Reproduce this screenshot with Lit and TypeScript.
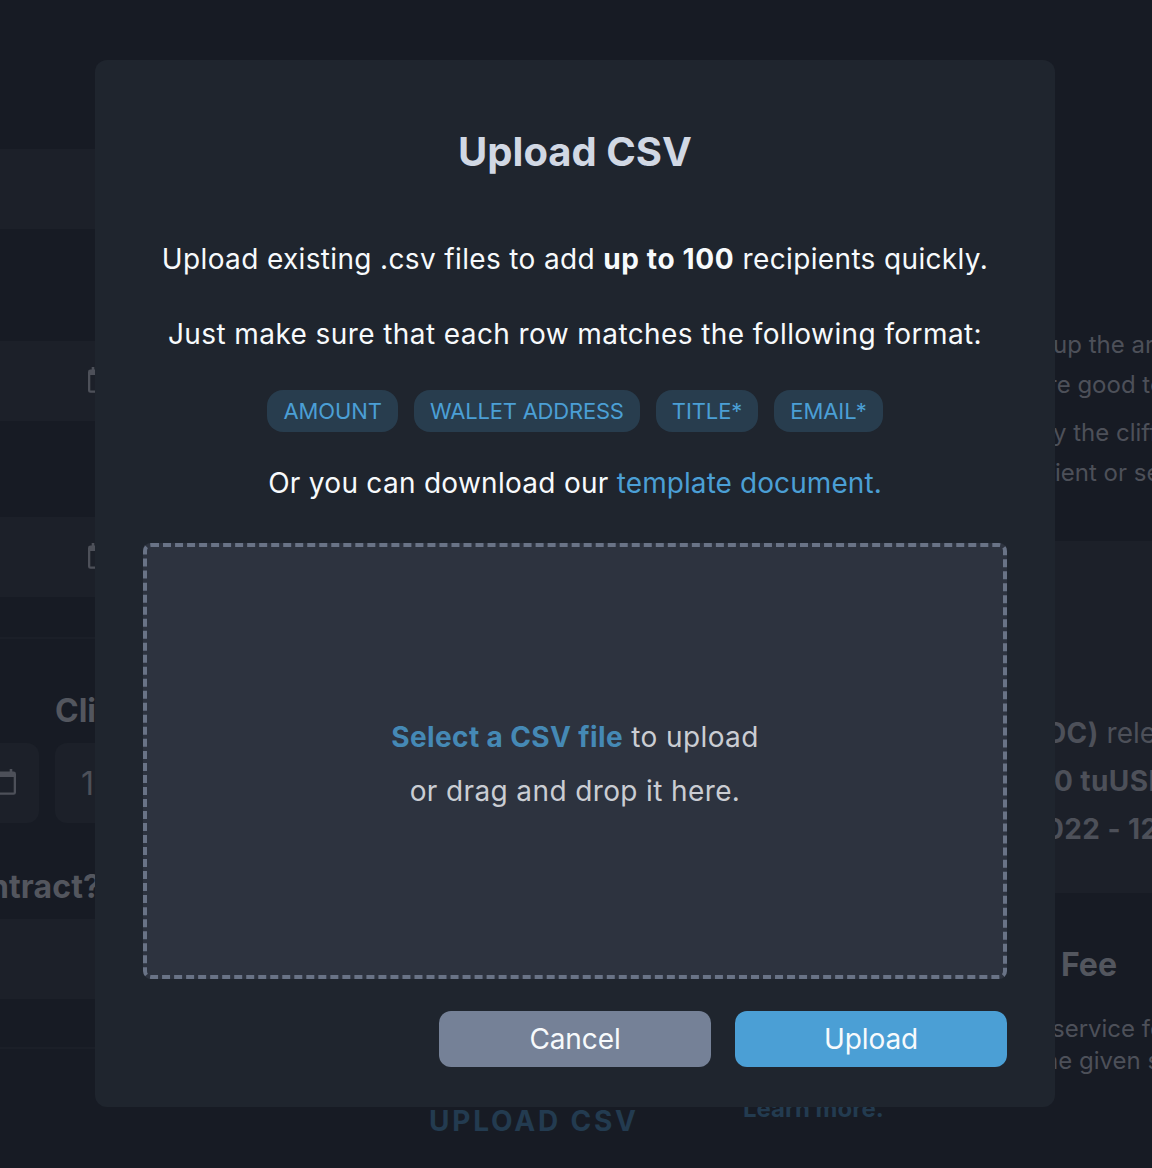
import { LitElement, html, css, svg } from "lit";
import { customElement } from "lit/decorators.js";

const calendar = html`<svg class="calendar" viewBox="0 0 24 28" aria-hidden="true">
  ${svg`<path fill-rule="evenodd" d="M3.7 0h2.6v2.6h11.4V0h2.6v2.6H21.6A2.4 2.4 0 0 1 24 5v18.4a2.4 2.4 0 0 1-2.4 2.4H2.4A2.4 2.4 0 0 1 0 23.4V5a2.4 2.4 0 0 1 2.4-2.4h1.3zM2.3 8v15.5h19.4V8z"/>`}
</svg>`;

/** Stream form that stays dimmed underneath the dialog. */
@customElement("stream-form")
export class StreamForm extends LitElement {
  static styles = css`
    :host { display: grid; grid-template-columns: 743px 409px; height: 1168px; overflow: hidden; color: #4d5059; }
    * { box-sizing: border-box; }
    .form { display: flex; flex-direction: column; padding-top: 149px; overflow: hidden; }
    .field { height: 80px; background: #1c2029; flex: none; display: flex; align-items: center; }
    .dated { padding-left: 88px; }
    .gap-a { margin-top: 112px; }
    .gap-b { margin-top: 96px; }
    .calendar { width: 24px; height: 28px; fill: currentColor; flex: none; margin-top: -1px; }
    .rule { height: 2px; background: #1b1f28; flex: none; margin-top: 40px; }
    .rule.last { margin-top: 48px; }
    .label { font-size: 32px; font-weight: 700; line-height: 40px; color: #53565e; white-space: nowrap; }
    .cliff { padding-left: 55px; margin-top: 52px; }
    .pair { display: flex; gap: 16px; margin-top: 12px; }
    .small { width: 39px; border-radius: 0 12px 12px 0; overflow: hidden; }
    .small .calendar { margin-left: -8px; }
    .number { width: 160px; border-radius: 12px; padding-left: 26px; font-size: 32px; }
    .contract { margin: 44px 0 12px; text-indent: -11px; letter-spacing: 0.1px; }
    .link { color: #233b50; font-weight: 700; }
    .open { align-self: flex-start; margin: 52px 0 0 429px; font-size: 28px; line-height: 40px; letter-spacing: 2.8px; white-space: nowrap; }
    .side { display: flex; flex-direction: column; padding-top: 325px; font-size: 24px; line-height: 40px; white-space: nowrap; overflow: hidden; }
    .side p { margin: 0; flex: none; }
    .a1 { padding-left: 310px; }
    .a2 { padding-left: 305px; }
    .side .a3 { padding-left: 310px; margin-top: 8px; }
    .a4 { padding-left: 312px; }
    .summary { background: #1c2029; height: 352px; margin-top: 48px; padding-top: 168px; font-size: 28px; line-height: 48px; flex: none; }
    .summary b { letter-spacing: 0.4px; }
    .b1 { padding-left: 303px; }
    .b2 { padding-left: 311px; }
    .b3 { padding-left: 302px; }
    .fee { padding-left: 318px; margin-top: 52px; }
    .note { line-height: 32px; }
    .side .c1 { padding-left: 309px; margin-top: 28px; }
    .c2 { padding-left: 301px; }
    .side .more { margin-top: 16px; }
  `;

  render() {
    return html`
      <section class="form">
        <div class="field"></div>
        <div class="field dated gap-a">${calendar}</div>
        <div class="field dated gap-b">${calendar}</div>
        <div class="rule"></div>
        <div class="label cliff">Cli</div>
        <div class="pair">
          <div class="field small">${calendar}</div>
          <div class="field number">1</div>
        </div>
        <div class="label contract">ntract?</div>
        <div class="field"></div>
        <div class="rule last"></div>
        <div class="link open">UPLOAD CSV</div>
      </section>
      <section class="side">
        <p class="a1">up the ar</p>
        <p class="a2">re good to</p>
        <p class="a3">y the cliff</p>
        <p class="a4">ient or se</p>
        <div class="summary">
          <p class="b1"><b>DC)</b> rele</p>
          <p class="b2"><b>0 tuUSD</b></p>
          <p class="b3"><b>022 - 12</b></p>
        </div>
        <div class="label fee">Fee</div>
        <p class="note c1">service fe</p>
        <p class="note c2">he given s</p>
        <p class="note link more">Learn more.</p>
      </section>
    `;
  }
}

/** Dialog for picking a CSV file of recipients. */
@customElement("upload-dialog")
export class UploadDialog extends LitElement {
  static styles = css`
    :host { display: flex; flex-direction: column; box-sizing: border-box; width: 960px; height: 1047px; padding: 68px 48px 40px; background: #1f252e; border-radius: 12px; color: #f7fafc; font-size: 28px; text-align: center; white-space: nowrap; }
    * { box-sizing: border-box; }
    h2 { margin: 0; font-size: 40px; line-height: 48px; font-weight: 700; color: #d1d8e4; }
    p { margin: 0; line-height: 42px; letter-spacing: 0.35px; }
    .lead { margin-top: 62px; letter-spacing: 0.35px; }
    .lead b { letter-spacing: 0.65px; }
    .format { margin-top: 33px; letter-spacing: 0.41px; }
    .tags { display: flex; justify-content: center; gap: 16px; margin-top: 35px; }
    .tag { height: 42px; padding: 0 16px; border-radius: 16px; background: #283d4e; color: #4b9fd5; font-size: 22px; line-height: 42px; letter-spacing: -0.08px; }
    .tag.wide { letter-spacing: -0.2px; }
    .template { margin-top: 30px; letter-spacing: 0.28px; }
    .link { color: #4b9fd5; }
    .template .link { letter-spacing: 0.08px; }
    .drop { display: flex; flex-direction: column; align-items: center; justify-content: center; height: 436px; margin-top: 39px; padding-top: 6px; border: 4px dashed #697386; border-radius: 8px; background: #2d333f; color: #cacdd3; }
    .drop p { line-height: 54px; letter-spacing: 0.38px; }
    .drop b { color: #4589b5; }
    .actions { display: flex; justify-content: flex-end; gap: 24px; margin-top: 32px; }
    button { width: 272px; height: 56px; padding: 0; border: 0; border-radius: 12px; background: #4b9fd5; color: #f7fafc; font: 400 28px/56px Inter, sans-serif; letter-spacing: -0.1px; }
    .cancel { background: #758197; }
  `;

  private tags = ["AMOUNT", "WALLET ADDRESS", "TITLE*", "EMAIL*"];

  render() {
    return html`
      <h2>Upload CSV</h2>
      <p class="lead">Upload existing .csv files to add <b>up to 100</b> recipients quickly.</p>
      <p class="format">Just make sure that each row matches the following format:</p>
      <div class="tags">${this.tags.map((t) => html`<span class="tag ${t.length > 8 ? "wide" : ""}">${t}</span>`)}</div>
      <p class="template">Or you can download our <span class="link">template document.</span></p>
      <div class="drop">
        <p><b>Select a CSV file</b> to upload</p>
        <p>or drag and drop it here.</p>
      </div>
      <div class="actions">
        <button class="cancel">Cancel</button>
        <button>Upload</button>
      </div>
    `;
  }
}

@customElement("app-root")
export class AppRoot extends LitElement {
  static styles = css`
    :host { display: block; position: relative; width: 1152px; height: 1168px; overflow: hidden; background: #171b24; font-family: Inter, sans-serif; }
    .dialog { position: absolute; left: 95px; top: 60px; }
  `;

  render() {
    return html`<stream-form></stream-form><upload-dialog class="dialog"></upload-dialog>`;
  }
}
